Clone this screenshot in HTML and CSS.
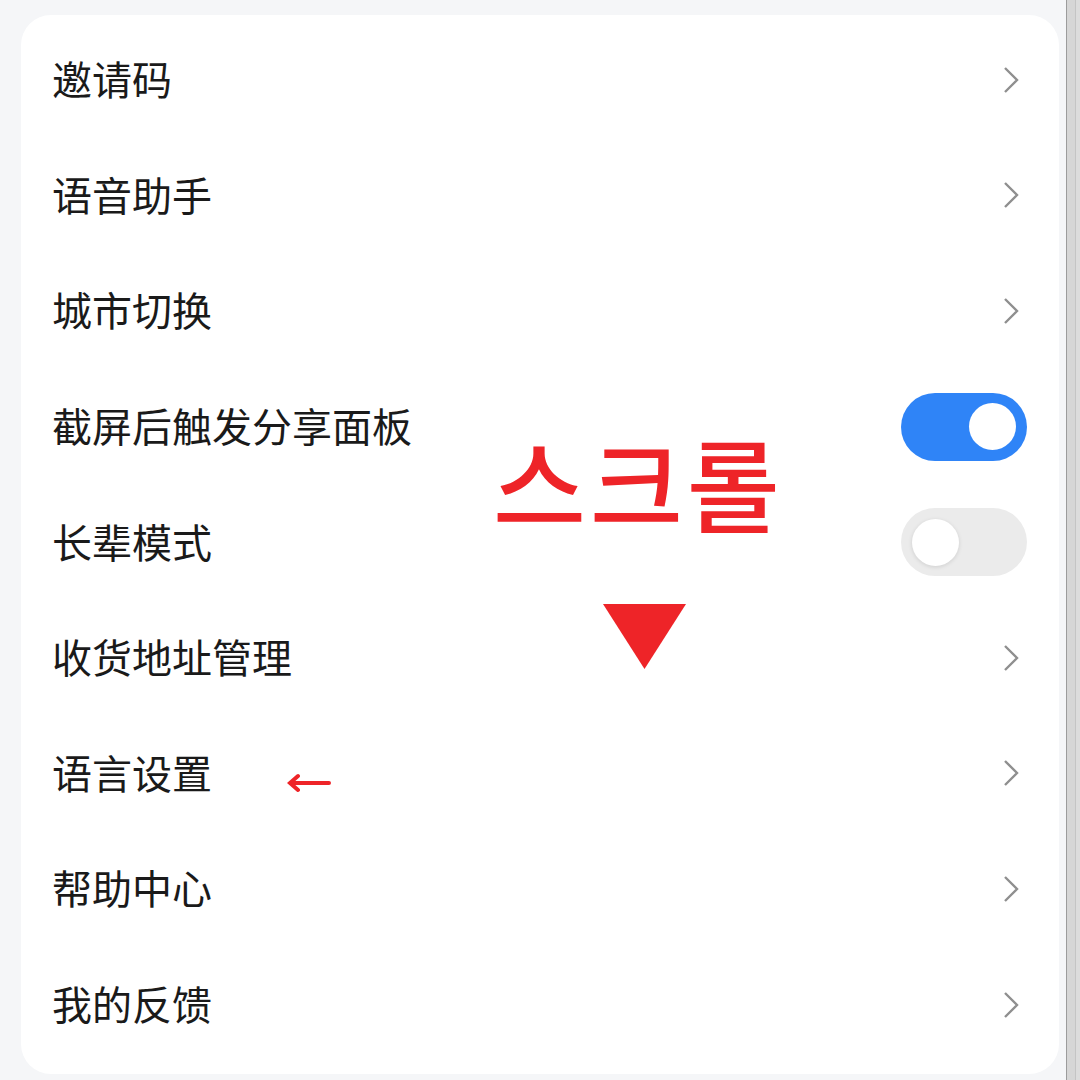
FILE: index.html
```html
<!DOCTYPE html>
<html lang="zh-CN">
<head>
<meta charset="utf-8">
<title>设置</title>
<link rel="stylesheet" href="styles.css">
</head>
<body>
<div class="page">
  <div class="main">
    <div class="card">
      <div class="row"><span class="label">邀请码</span><svg class="chev" viewBox="0 0 16 28"><path d="M2 2 L14 14 L2 26"/></svg></div>
      <div class="row"><span class="label">语音助手</span><svg class="chev" viewBox="0 0 16 28"><path d="M2 2 L14 14 L2 26"/></svg></div>
      <div class="row"><span class="label">城市切换</span><svg class="chev" viewBox="0 0 16 28"><path d="M2 2 L14 14 L2 26"/></svg></div>
      <div class="row"><span class="label">截屏后触发分享面板</span><span class="switch on"><span class="knob"></span></span></div>
      <div class="row"><span class="label">长辈模式</span><span class="switch off"><span class="knob"></span></span></div>
      <div class="row"><span class="label">收货地址管理</span><svg class="chev" viewBox="0 0 16 28"><path d="M2 2 L14 14 L2 26"/></svg></div>
      <div class="row"><span class="label">语言设置</span><svg class="chev" viewBox="0 0 16 28"><path d="M2 2 L14 14 L2 26"/></svg></div>
      <div class="row"><span class="label">帮助中心</span><svg class="chev" viewBox="0 0 16 28"><path d="M2 2 L14 14 L2 26"/></svg></div>
      <div class="row"><span class="label">我的反馈</span><svg class="chev" viewBox="0 0 16 28"><path d="M2 2 L14 14 L2 26"/></svg></div>
    </div>
  </div>
  <div class="strip"></div>
</div>
<div class="note-text">스크롤</div>
<svg class="note-tri" viewBox="0 0 83 65"><polygon points="0,0 83,0 41.5,65"/></svg>
<svg class="note-arrow" viewBox="0 0 44 22"><path d="M42 11 H4 M11 4 L3 11 L11 18"/></svg>
</body>
</html>
```
FILE: styles.css
```css
html, body {
  margin: 0;
  padding: 0;
}
body {
  width: 1080px;
  height: 1080px;
  overflow: hidden;
  background: #f5f6f8;
  font-family: "Noto Sans CJK SC", "Noto Sans", sans-serif;
  position: relative;
}
.page {
  display: flex;
  height: 1080px;
}
.main {
  flex: 1;
  padding: 15px 7px 5px 21px;
}
.card {
  background: #ffffff;
  border-radius: 30px;
  padding: 7px 0 12px 0;
  display: flex;
  flex-direction: column;
}
.row {
  height: 115.6px;
  display: flex;
  align-items: center;
  justify-content: space-between;
  padding: 0 32px 0 31px;
}
.label {
  font-size: 40px;
  color: #1a1a1a;
  line-height: 1;
  margin-top: -3px;
}
.chev {
  width: 16px;
  height: 28px;
  margin-right: 8px;
  fill: none;
  stroke: #8f8f8f;
  stroke-width: 2.4;
}
.switch {
  width: 126px;
  height: 68px;
  border-radius: 34px;
  display: flex;
  align-items: center;
  box-sizing: border-box;
}
.switch.on {
  background: #2f84f7;
  justify-content: flex-end;
  padding-right: 11px;
}
.switch.off {
  background: #ebebeb;
  justify-content: flex-start;
  padding-left: 11px;
}
.knob {
  width: 47px;
  height: 47px;
  border-radius: 50%;
  background: #ffffff;
}
.switch.off .knob {
  box-shadow: 0 1px 4px rgba(0,0,0,0.12);
}
.strip {
  width: 13px;
  background: #d6d6d6;
  border-left: 1px solid #9c9c9c;
  box-shadow: inset -4px 0 0 #dcdcdc, inset -5px 0 0 #c4c4c4;
}
.note-text {
  position: absolute;
  left: 493px;
  top: 431px;
  font-family: "Noto Sans CJK KR", sans-serif;
  font-weight: 500;
  font-size: 101px;
  line-height: 1;
  color: #ee2428;
  letter-spacing: 4px;
}
.note-tri {
  position: absolute;
  left: 603px;
  top: 604px;
  width: 83px;
  height: 65px;
  fill: #ee2428;
}
.note-arrow {
  position: absolute;
  left: 287px;
  top: 772px;
  width: 44px;
  height: 22px;
  fill: none;
  stroke: #ee2428;
  stroke-width: 4;
  stroke-linecap: round;
}
```
